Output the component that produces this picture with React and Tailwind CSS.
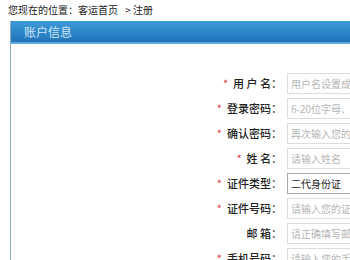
import React from 'react';

const fields = [
    { label: '用 户 名：', placeholder: '用户名设置成功后不可修改', required: true },
    { label: '登录密码：', placeholder: '6-20位字母、数字或符号', required: true },
    { label: '确认密码：', placeholder: '再次输入您的登录密码', required: true },
    { label: '姓 名：', placeholder: '请输入姓名', required: true },
    { label: '证件类型：', value: '二代身份证', required: true, select: true },
    { label: '证件号码：', placeholder: '请输入您的证件号码', required: true },
    { label: '邮 箱：', placeholder: '请正确填写邮箱地址', required: false },
    { label: '手机号码：', placeholder: '请输入您的手机号码', required: true },
];

const FormRow = ({ label, placeholder, value, required, select }) => (
    <div className="flex items-center h-[25px]">
        <div className="w-[271px] shrink-0 text-right text-[11px] font-medium text-[#222] whitespace-pre">
            {required && <span className="text-[#e4393c] font-normal mr-[5px]">*</span>}
            {label}
        </div>
        <div
            className={`ml-[5px] w-[140px] h-[21px] shrink-0 flex items-center pl-[3px] text-[10px] bg-white border overflow-hidden whitespace-nowrap ${
                select ? 'border-[#a9a9a9] text-[#222]' : 'border-[#dcdcdc] text-[#b5b5b5]'
            }`}
        >
            {select ? value : placeholder}
        </div>
    </div>
);

const App = () => {
    return (
        <div
            className="w-[350px] h-[260px] overflow-hidden bg-white"
            style={{ fontFamily: '"Noto Sans CJK SC", "Noto Sans", sans-serif' }}
        >
            {/* Breadcrumb */}
            <div className="h-[21px] pl-[8px] pt-[3px] text-[10px] leading-[14px] text-[#222]">
                您现在的位置：客运首页 <span className="ml-[5px]">&gt; 注册</span>
            </div>

            {/* Panel */}
            <div className="ml-[10px] border-l border-[#8fafc0] h-[239px]">
                <div className="h-[23px] bg-gradient-to-b from-[#3d9ad9] to-[#2174b8] border-b-2 border-[#5fa9dc] flex items-center pl-[13px]">
                    <span className="text-[12px] text-[#cfe5f6]">账户信息</span>
                </div>
                <div className="pt-[27px]">
                    {fields.map((f, i) => (
                        <FormRow key={i} {...f} />
                    ))}
                </div>
            </div>
        </div>
    );
};

export default App;
